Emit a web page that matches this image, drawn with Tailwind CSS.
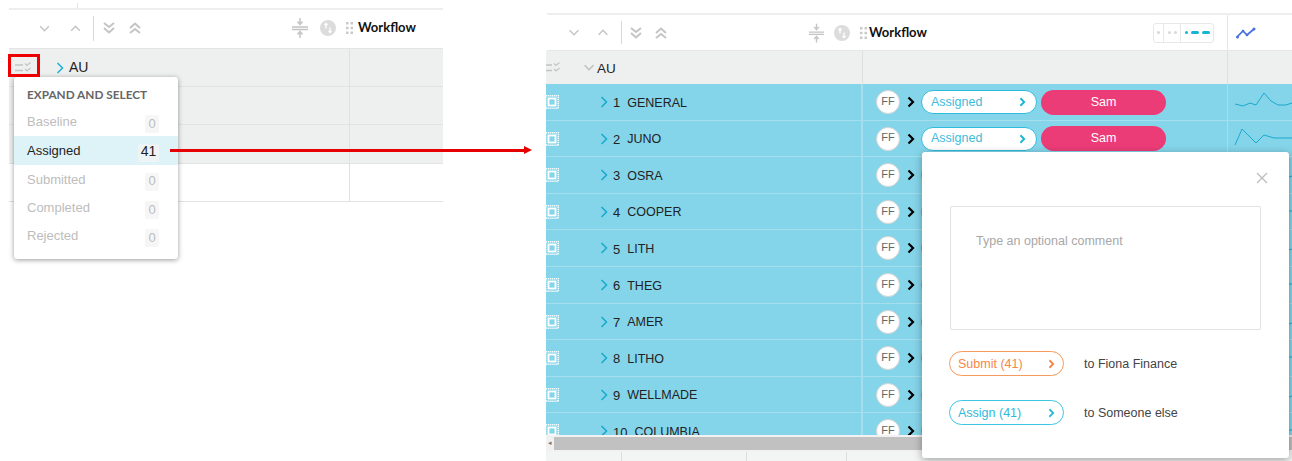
<!DOCTYPE html>
<html lang="en">
<head>
    <meta charset="UTF-8">
    <script src="https://cdn.jsdelivr.net/npm/@tailwindcss/browser@4"></script>
    <title>Workflow</title>
</head>
<body class="bg-white font-['Liberation_Sans',sans-serif] text-[#222]">
    <svg class="hidden">
        <symbol id="down" viewBox="0 0 12 8"><path d="M1 1.5 6 6.5 11 1.5" fill="none" stroke="currentColor" stroke-width="1.6"/></symbol>
        <symbol id="up" viewBox="0 0 12 8"><path d="M1 6.5 6 1.5 11 6.5" fill="none" stroke="currentColor" stroke-width="1.6"/></symbol>
        <symbol id="ddown" viewBox="0 0 12 12"><path d="M1 1 6 5 11 1M1 6 6 10.5 11 6" fill="none" stroke="currentColor" stroke-width="2"/></symbol>
        <symbol id="dup" viewBox="0 0 12 12"><path d="M1 6 6 1.5 11 6M1 11 6 7 11 11" fill="none" stroke="currentColor" stroke-width="2"/></symbol>
        <symbol id="squeeze" viewBox="0 0 16 20"><path d="M0 9h16M0 11.5h16" stroke="currentColor" stroke-width="1.4"/><path d="M8 0v5M5.5 3.5 8 6.5 10.500 3.5M8 20v-5M5.500 16.500 8 13.500 10.500 16.500" fill="none" stroke="currentColor" stroke-width="1.500"/></symbol>
        <symbol id="badge" viewBox="0 0 16 16"><circle cx="8" cy="8" r="8" fill="#dcdcdc"/><path d="M6 3.500v5M4.500 5 6 3.500 7.500 5M10 12.500v-5M8.500 11 10 12.500 11.500 11" fill="none" stroke="#fff" stroke-width="1.300"/></symbol>
        <symbol id="grip" viewBox="0 0 7 12"><path d="M0 0h2.500v2.500H0zM4.500 0H7v2.500H4.500zM0 4.700h2.500v2.500H0zM4.500 4.700H7v2.500H4.500zM0 9.400h2.500v2.500H0zM4.500 9.400H7v2.500H4.500z" fill="#c9c9c9"/></symbol>
        <symbol id="right" viewBox="0 0 8 12"><path d="M1.500 1 6.500 6 1.500 11" fill="none" stroke="currentColor" stroke-width="1.600"/></symbol>
        <symbol id="rightb" viewBox="0 0 8 12"><path d="M1.500 1.500 6 6 1.500 10.500" fill="none" stroke="currentColor" stroke-width="2.200"/></symbol>
        <symbol id="listcheck" viewBox="0 0 16 11"><path d="M0 3h8M0 8.500h8" stroke="#c4c4c4" stroke-width="1.500"/><path d="M10 1.500 12 3.500 15.500 0.500M10 7 12 9 15.500 6" fill="none" stroke="#c4c4c4" stroke-width="1.200"/></symbol>
        <symbol id="rowcheck" viewBox="0 0 14 14"><rect x="0.700" y="0.700" width="12.600" height="12.600" fill="none" stroke="#fff" stroke-width="1.400" stroke-dasharray="1.200 0.800"/><rect x="3.500" y="3.500" width="7" height="7" fill="none" stroke="#fff" stroke-width="1.800"/></symbol>
    </svg>

    <div class="relative flex h-[461px] w-[1292px] overflow-hidden">
        <!-- Left panel -->
        <div class="w-[546px] shrink-0 pl-[9px] pr-[103px] pt-[3px]">
            <div class="ml-[68px] h-[5px] w-px bg-[#e4e4e4]"></div>
            <div class="border-t-2 border-[#eeeeee]">
                <div class="flex h-[39px] items-center border-b border-[#e4e4e4] pb-[2px] text-[#c4c4c4]">
                    <svg class="ml-[30px] h-[7px] w-[11px]"><use href="#down"/></svg>
                    <svg class="ml-[20px] h-[7px] w-[11px]"><use href="#up"/></svg>
                    <div class="ml-[12px] h-[25px] w-px bg-[#d8d8d8]"></div>
                    <svg class="ml-[9px] h-[12px] w-[12px]"><use href="#ddown"/></svg>
                    <svg class="ml-[14px] h-[12px] w-[12px]"><use href="#dup"/></svg>
                    <svg class="ml-[151px] h-[20px] w-[16px]"><use href="#squeeze"/></svg>
                    <svg class="ml-[12px] h-[16px] w-[16px]"><use href="#badge"/></svg>
                    <svg class="ml-[10px] h-[12px] w-[7px]"><use href="#grip"/></svg>
                    <span class="ml-[5px] font-['Lato',sans-serif] text-[13px] font-bold text-[#111]">Workflow</span>
                </div>
                <div class="grid h-[38px] grid-cols-[341px_1fr] border-b border-[#e2e2e2] bg-[#eeefef]">
                    <div class="flex items-center border-r border-[#e0e0e0]">
                        <svg class="ml-[6px] h-[11px] w-[16px]"><use href="#listcheck"/></svg>
                        <svg class="ml-[25px] h-[12px] w-[8px] text-[#22b4d6]"><use href="#right"/></svg>
                        <span class="ml-[5px] text-[14px]">AU</span>
                    </div>
                </div>
                <div class="grid h-[38px] grid-cols-[341px_1fr] border-b border-[#e2e2e2] bg-[#eeefef]"><div class="border-r border-[#e0e0e0]"></div></div>
                <div class="grid h-[39px] grid-cols-[341px_1fr] border-b border-[#e2e2e2] bg-[#eeefef]"><div class="border-r border-[#e0e0e0]"></div></div>
                <div class="grid h-[38px] grid-cols-[341px_1fr] border-b border-[#e2e2e2]"><div class="border-r border-[#e0e0e0]"></div></div>
            </div>
        </div>

        <!-- Right panel -->
        <div class="flex w-[746px] shrink-0 flex-col pt-[13px]">
            <div class="ml-px border-t-2 border-[#eeeeee]">
                <div class="flex h-[36px] items-center border-b border-[#e6e6e6] text-[#c4c4c4]">
                    <svg class="ml-[21px] h-[7px] w-[12px]"><use href="#down"/></svg>
                    <svg class="ml-[17px] h-[7px] w-[12px]"><use href="#up"/></svg>
                    <div class="ml-[12px] h-[23px] w-px bg-[#d8d8d8]"></div>
                    <svg class="ml-[8px] h-[12px] w-[12px]"><use href="#ddown"/></svg>
                    <svg class="ml-[13px] h-[12px] w-[12px]"><use href="#dup"/></svg>
                    <svg class="ml-[142px] h-[20px] w-[15px]"><use href="#squeeze"/></svg>
                    <svg class="ml-[10px] h-[16px] w-[16px]"><use href="#badge"/></svg>
                    <svg class="ml-[10px] h-[12px] w-[7px]"><use href="#grip"/></svg>
                    <span class="ml-[2px] w-[60px] font-['Lato',sans-serif] text-[13px] font-bold text-[#111]">Workflow</span>
                    <div class="ml-[224px] flex h-[20px] w-[61px] items-center rounded-[3px] border border-[#e8e8e8]">
                        <div class="flex h-full w-[10px] items-center justify-center border-r border-[#e8e8e8]"><i class="size-[3px] rounded-full bg-[#d8d8d8]"></i></div>
                        <div class="flex h-full w-[17px] items-center justify-center gap-[3px] border-r border-[#e8e8e8]"><i class="size-[3px] rounded-full bg-[#d8d8d8]"></i><i class="size-[3px] rounded-full bg-[#d8d8d8]"></i></div>
                        <div class="flex flex-1 items-center justify-center gap-[3px]"><i class="size-[3px] rounded-full bg-[#16b4d6]"></i><i class="h-[3px] w-[8px] rounded-full bg-[#16b4d6]"></i><i class="h-[3px] w-[8px] rounded-full bg-[#16b4d6]"></i></div>
                    </div>
                    <div class="ml-[13px] flex h-full items-center border-l border-[#e6e6e6] pl-[8px]">
                        <svg class="h-[12px] w-[20px]" viewBox="0 0 20 12"><path d="M1 10 7 4 11 8 18 2" fill="none" stroke="#4a6fe0" stroke-width="1.700"/><circle cx="1.500" cy="10" r="1.500" fill="#4a6fe0"/><circle cx="7" cy="4" r="1.300" fill="#4a6fe0"/><circle cx="11" cy="8" r="1.300" fill="#4a6fe0"/><circle cx="18" cy="2" r="1.500" fill="#4a6fe0"/></svg>
                    </div>
                </div>
            </div>
            <div class="h-[384px] overflow-hidden">
                <div class="grid h-[33px] grid-cols-[317px_365px_1fr] bg-[#eeefef]">
                    <div class="flex items-center border-r border-[#dfdfdf]">
                        <svg class="-ml-[2px] h-[11px] w-[16px]"><use href="#listcheck"/></svg>
                        <svg class="ml-[23px] h-[7px] w-[12px] text-[#bdbdbd]"><use href="#down"/></svg>
                        <span class="ml-[2px] pt-[4px] text-[13.500px]">AU</span>
                    </div>
                    <div class="border-r border-[#dfdfdf]"></div>
                </div>
                <div id="rows"></div>
            </div>
            <!-- Scrollbar and footer -->
            <div class="h-[17px] border-y-2 border-[#f2f2f2] bg-[#c1c1c1]">
                <div class="flex h-full w-[8px] items-center justify-center bg-[#f1f1f1] text-[7px] text-[#777]">◂</div>
            </div>
            <div class="grid flex-1 grid-cols-[76px_125px_100px_1fr] bg-[#f3f4f4]">
                <div class="border-r border-[#dddddd]"></div>
                <div class="border-r border-[#dddddd]"></div>
                <div class="border-r border-[#dddddd]"></div>
            </div>
        </div>

        <!-- Expand and select menu -->
        <div class="absolute left-[14px] top-[77px] h-[182px] w-[164px] rounded-[3px] bg-white shadow-[0_1px_5px_rgba(0,0,0,0.4)]">
            <p class="pl-[13px] pt-[11px] font-['Lato',sans-serif] text-[11.800px] font-bold leading-[14px] text-[#666]">EXPAND AND SELECT</p>
            <ul class="mt-[6px] text-[13px] text-[#bdbdbd]">
                <li class="flex h-[28px] items-center justify-between pl-[13px] pr-[19px]">Baseline<span class="mt-[4px] flex h-[18px] w-[14px] items-end justify-center rounded-[2px] bg-[#f6f6f6]">0</span></li>
                <li class="flex h-[29px] items-center justify-between bg-[#def3f8] pl-[13px] pr-[19px] text-[#222]">Assigned<span class="mt-[4px] flex h-[18px] w-[21px] items-end justify-center rounded-[2px] bg-[#eef4f5] text-[14px]">41</span></li>
                <li class="flex h-[29px] items-center justify-between pl-[13px] pr-[19px]">Submitted<span class="mt-[4px] flex h-[18px] w-[14px] items-end justify-center rounded-[2px] bg-[#f6f6f6]">0</span></li>
                <li class="flex h-[28px] items-center justify-between pl-[13px] pr-[19px]">Completed<span class="mt-[4px] flex h-[18px] w-[14px] items-end justify-center rounded-[2px] bg-[#f6f6f6]">0</span></li>
                <li class="flex h-[28px] items-center justify-between pl-[13px] pr-[19px]">Rejected<span class="mt-[4px] flex h-[18px] w-[14px] items-end justify-center rounded-[2px] bg-[#f6f6f6]">0</span></li>
            </ul>
        </div>

        <!-- Annotations -->
        <div class="absolute left-[8px] top-[54px] h-[23px] w-[32px] border-[3px] border-[#ee0000]"></div>
        <div class="absolute left-[170px] top-[149px] h-[3px] w-[355px] bg-[#e60000]"></div>
        <div class="absolute left-[524px] top-[146px] h-0 w-0 border-y-[4.500px] border-l-[8px] border-y-transparent border-l-[#e60000]"></div>

        <!-- Submit dialog -->
        <div class="absolute left-[922px] top-[152px] h-[306px] w-[367px] rounded-[3px] bg-white shadow-[0_2px_8px_rgba(0,0,0,0.35)]">
            <div class="flex justify-end pr-[21px] pt-[20px]">
                <svg class="size-[12px] text-[#bdbdbd]" viewBox="0 0 12 12"><path d="M1 1 11 11M11 1 1 11" stroke="currentColor" stroke-width="1.300"/></svg>
            </div>
            <div class="ml-[28px] mt-[22px] h-[124px] w-[311px] rounded-[2px] border border-[#e2e2e2] pl-[25px] pt-[27px] text-[12.500px] leading-[14px] text-[#a8a8a8]">Type an optional comment</div>
            <div class="ml-[27px] mt-[21px] flex items-center">
                <div class="flex h-[25px] w-[115px] items-center justify-between rounded-full border border-[#f79a5e] pl-[8px] pr-[8px] pt-[1px] text-[12.500px] text-[#f58746]">Submit (41)<svg class="h-[10px] w-[7px]"><use href="#rightb"/></svg></div>
                <span class="ml-[20px] pt-[1px] text-[12.500px] text-[#444]">to Fiona Finance</span>
            </div>
            <div class="ml-[27px] mt-[24px] flex items-center">
                <div class="flex h-[25px] w-[115px] items-center justify-between rounded-full border border-[#3fc6e3] pl-[8px] pr-[8px] pt-[1px] text-[12.500px] text-[#2fb9da]">Assign (41)<svg class="h-[10px] w-[7px]"><use href="#rightb"/></svg></div>
                <span class="ml-[20px] pt-[1px] text-[12.500px] text-[#444]">to Someone else</span>
            </div>
        </div>
    </div>

    <script>
        const names = ['GENERAL', 'JUNO', 'OSRA', 'COOPER', 'LITH', 'THEG', 'AMER', 'LITHO', 'WELLMADE', 'COLUMBIA'];
        const sparks = ['M7 32 15 34 22 31 28 33 36 21 43 29 50 33 58 33 64 31', 'M7 36 14 20 28 34 36 26 46 29 64 29'];

        document.getElementById('rows').innerHTML = names.map((name, i) => `
            <div class="grid h-[36.600px] grid-cols-[317px_365px_1fr] border-b border-[#a5dfee] bg-[#85d5ea]">
                <div class="flex items-center border-r-2 border-[#a5dfee] text-[12.500px]">
                    <svg class="h-[14px] w-[14px] shrink-0 -ml-[1px]"><use href="#rowcheck"/></svg>
                    <svg class="ml-[41px] h-[12px] w-[8px] shrink-0 text-[#1ba9cf]"><use href="#right"/></svg>
                    <span class="ml-[5px] pt-[2px] text-[13px]">${i + 1}</span>
                    <span class="ml-[7px] pt-[2px]">${name}</span>
                </div>
                <div class="flex items-center border-r border-[#a5dfee] pl-[13px]">
                    <div class="flex size-[24px] items-center justify-center rounded-full border border-[#d5d5d5] bg-white pb-[2px] text-[11px] text-[#666]">FF</div>
                    <svg class="ml-[7px] h-[12px] w-[8px] text-black"><use href="#rightb"/></svg>
                    <div class="ml-[6px] flex h-[24px] w-[116px] items-center justify-between rounded-full border border-[#2fbcdc] bg-white pl-[9px] pr-[10px] text-[12.500px] text-[#3dbcdc]">Assigned<svg class="h-[10px] w-[7px] text-[#16b4d6]"><use href="#rightb"/></svg></div>
                    <div class="ml-[4px] flex h-[25px] w-[125px] items-center justify-center rounded-full bg-[#ec3c78] text-[12.500px] text-white">Sam</div>
                </div>
                <svg class="h-[36px] w-[64px]" viewBox="0 0 64 36" overflow="hidden"><path transform="translate(0 -12)" d="${sparks[i % 2]}" fill="none" stroke="#1ba9cf" stroke-width="1"/></svg>
            </div>`).join('');
    </script>
</body>
</html>
